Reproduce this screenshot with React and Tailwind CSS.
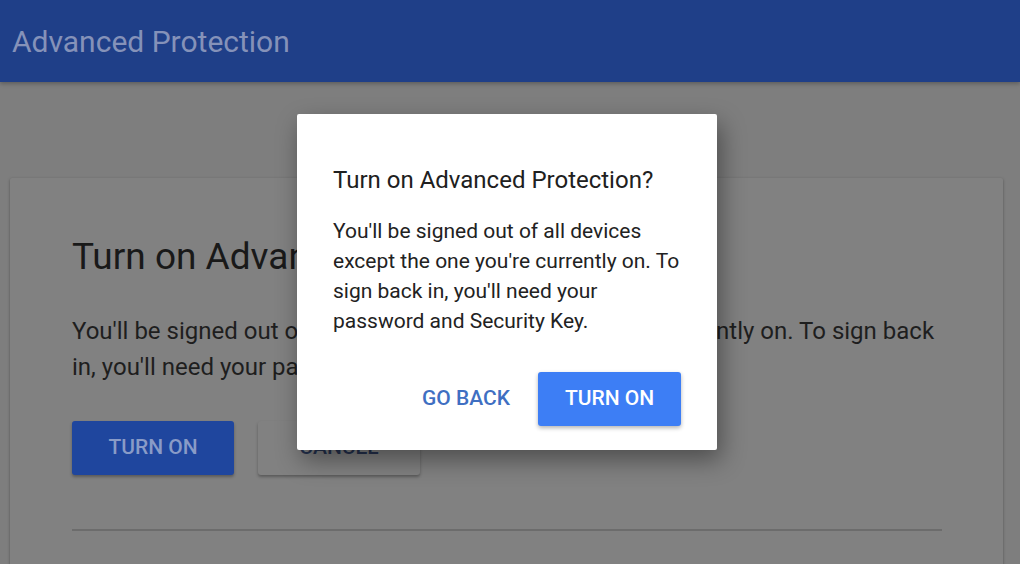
export default function App() {
  return (
    <div className="relative h-[564px] w-[1020px] overflow-hidden bg-[#7e7e7e] font-['Roboto',sans-serif]">
      <header className="flex h-[82px] items-center bg-[#1f3f88] px-3 shadow-[0_2px_4px_rgba(0,0,0,0.25)]">
        <h1 className="text-[30px] font-normal text-[#8592b9]">Advanced Protection</h1>
      </header>

      <main className="pl-[10px] pr-[17px] pt-[96px]">
        <section className="rounded-[2px] bg-[#818181] pl-[62px] pr-[61px] pt-[58px] pb-10 shadow-[0_1px_3px_rgba(0,0,0,0.35)]">
          <h2 className="text-[37px] leading-[42px] text-[#191919]">Turn on Advanced Protection</h2>
          <p className="mt-[35px] whitespace-nowrap text-[24px] leading-[36px] text-[#1e1e1e]">
            You'll be signed out of all devices except the one you're currently on. To sign back
            <br />
            in, you'll need your password and Security Key.
          </p>
          <div className="mt-9 flex gap-6">
            <button className="h-[54px] w-[162px] rounded-[3px] bg-[#1f469e] text-[21px] font-medium text-[#899bc7] shadow-[0_2px_3px_rgba(0,0,0,0.3)]">
              TURN ON
            </button>
            <button className="h-[54px] w-[162px] rounded-[3px] bg-[#818181] text-[21px] font-medium text-[#25324f] shadow-[0_2px_3px_rgba(0,0,0,0.3)]">
              CANCEL
            </button>
          </div>
          <div className="mt-[54px] h-[2px] bg-[#6c6c6c]" />
        </section>
      </main>

      <div className="absolute inset-0 flex items-center justify-center pr-[6px]">
        <div className="w-[420px] rounded-[2px] bg-white pl-9 pr-9 pt-[52px] pb-6 shadow-[4px_10px_24px_rgba(0,0,0,0.4)]">
          <h3 className="text-[24px] leading-[28px] text-[#202020]">Turn on Advanced Protection?</h3>
          <p className="mt-[22px] whitespace-nowrap text-[21px] leading-[30px] text-[#222222]">
            You'll be signed out of all devices
            <br />
            except the one you're currently on. To
            <br />
            sign back in, you'll need your
            <br />
            password and Security Key.
          </p>
          <div className="mt-9 flex justify-end gap-4">
            <button className="h-[54px] px-3 text-[21px] font-medium text-[#3f6fc2]">GO BACK</button>
            <button className="h-[54px] w-[143px] rounded-[3px] bg-[#3d7ef5] text-[21px] font-medium text-white shadow-[0_2px_4px_rgba(0,0,0,0.3)]">
              TURN ON
            </button>
          </div>
        </div>
      </div>
    </div>
  );
}
